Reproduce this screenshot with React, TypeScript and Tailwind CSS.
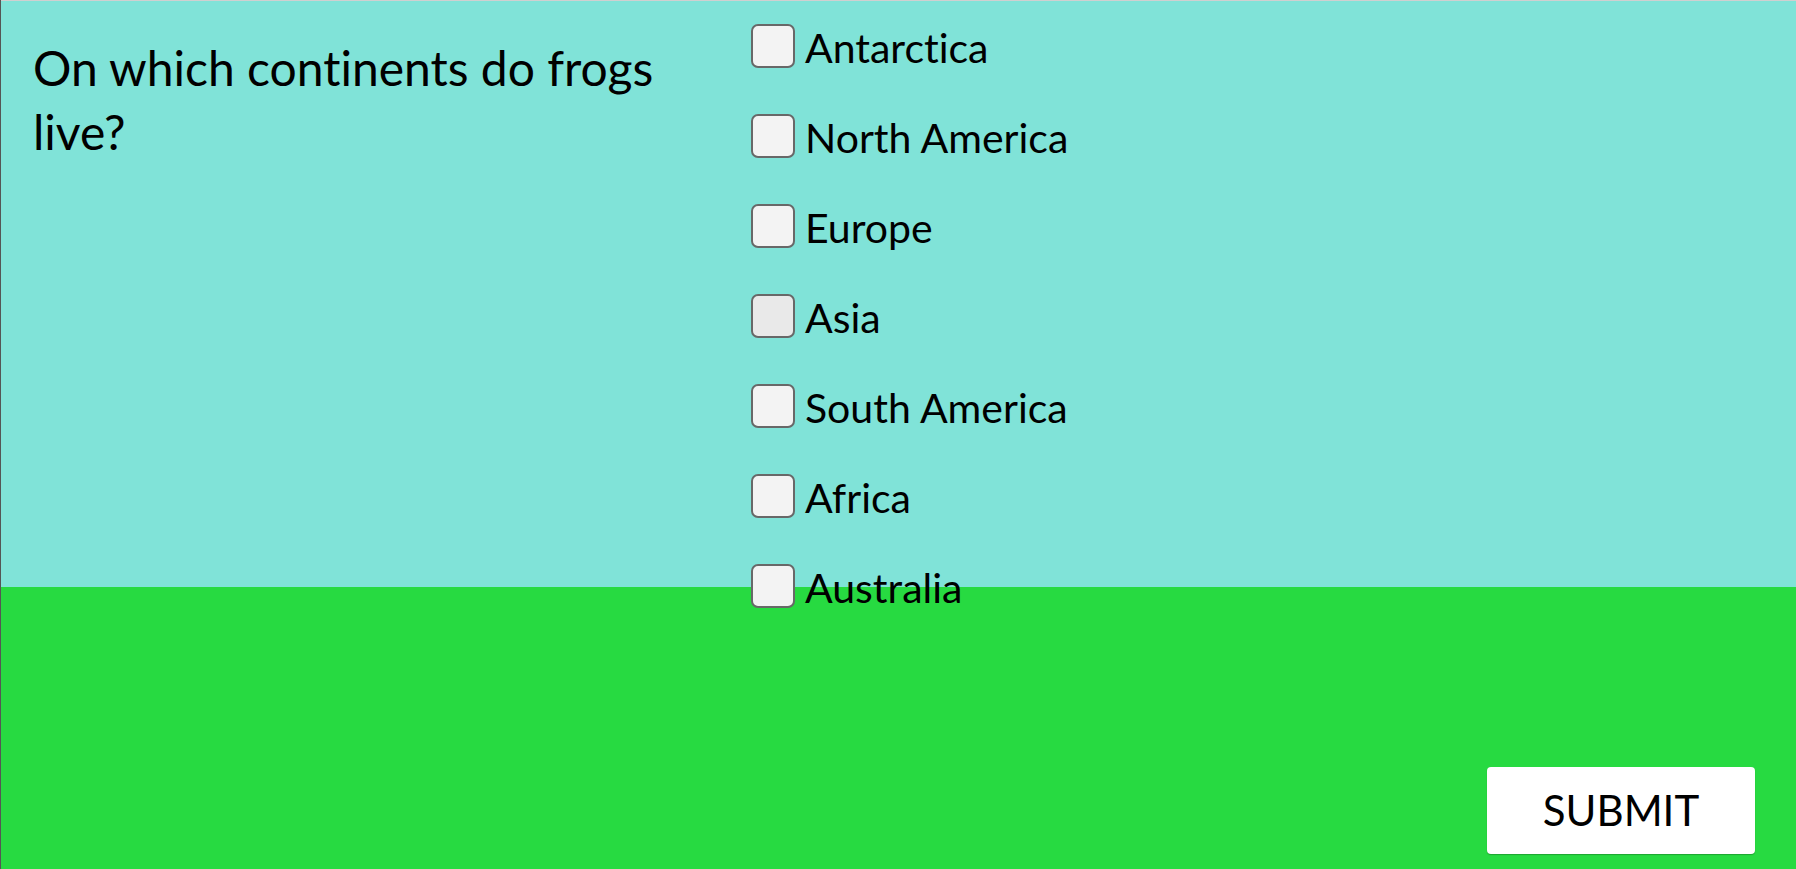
import React from "react";

const options = ["Antarctica", "North America", "Europe", "Asia", "South America", "Africa", "Australia"];

export default function App() {
  return (
    <div className="flex h-[869px] w-full flex-col overflow-hidden border-l border-l-[#555555] font-['Lato',sans-serif] text-black [font-variant-ligatures:none]">
      <div className="relative z-10 flex h-[587px] shrink-0 border-t border-t-[#d0d0d0] bg-[#80e3d8]">
        <div className="w-[750px] shrink-0 pl-[32px] pr-[28px] pt-[35px] text-[48px] leading-[64px]">
          On which continents do frogs live?
        </div>
        <div className="flex flex-col pt-[23px]">
          {options.map((o, i) => (
            <div key={o} className="flex h-[90px] shrink-0 items-start">
              <div className="flex h-[44px] items-center gap-[10px]">
                <span
                  className={
                    "block h-[44px] w-[44px] shrink-0 rounded-[7px] border-2 border-[#686868] " +
                    (i === 3 ? "bg-[#e9e9e9]" : "bg-[#f3f3f3]")
                  }
                />
                <span className="whitespace-nowrap pt-[4px] text-[41px] leading-[44px]">{o}</span>
              </div>
            </div>
          ))}
        </div>
      </div>
      <div className="flex flex-1 items-end justify-end bg-[#27da41] pb-[15px] pr-[41px]">
        <button className="flex h-[87px] w-[268px] items-center justify-center rounded-[4px] bg-white text-[42px] shadow-[0_1px_1px_rgba(0,0,0,0.25)]">
          SUBMIT
        </button>
      </div>
    </div>
  );
}
